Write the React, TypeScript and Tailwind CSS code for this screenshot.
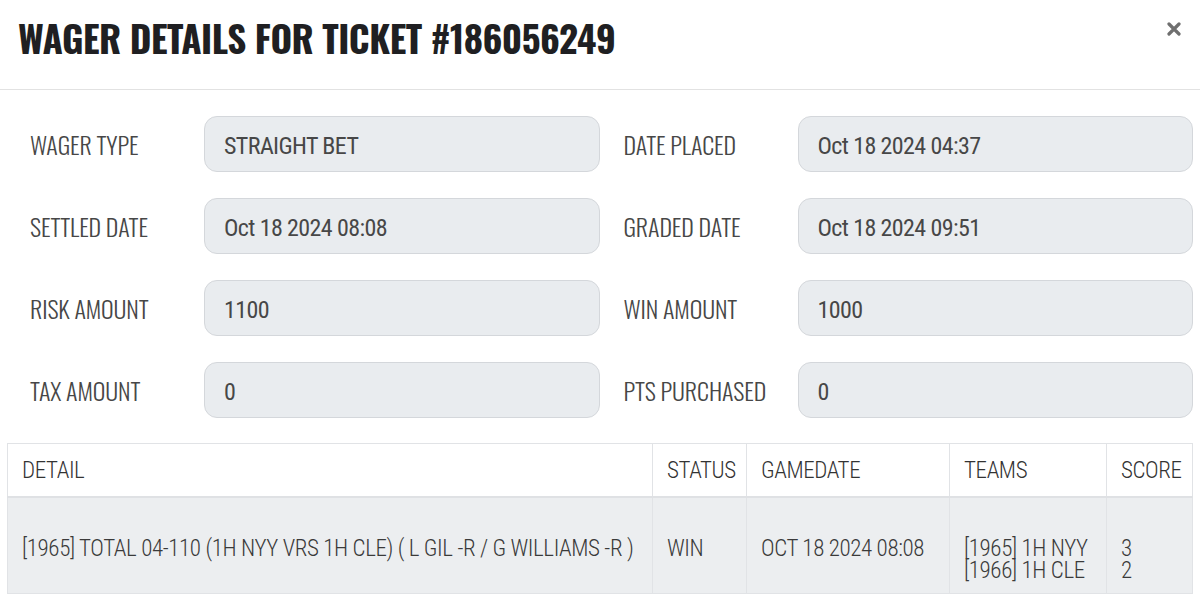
import React from "react";

const fields: [string, string][] = [
  ["WAGER TYPE", "STRAIGHT BET"],
  ["DATE PLACED", "Oct 18 2024 04:37"],
  ["SETTLED DATE", "Oct 18 2024 08:08"],
  ["GRADED DATE", "Oct 18 2024 09:51"],
  ["RISK AMOUNT", "1100"],
  ["WIN AMOUNT", "1000"],
  ["TAX AMOUNT", "0"],
  ["PTS PURCHASED", "0"],
];

const th = "border-r border-[#e1e3e6] px-[14px] pt-[3px] text-left font-light align-middle";
const td = "border-r border-[#e1e3e6] px-[14px] pt-[40px] align-top leading-[22px]";

export default function App() {
  return (
    <div className="w-[1200px] h-[600px] overflow-hidden bg-white text-[#333] font-['Oswald','Roboto_Condensed',sans-serif]">
      <div className="flex h-[90px] items-start justify-between border-b border-[#e2e2e2] pl-[18px] pr-[19px]">
        <h1 className="mt-[12px] text-[37px] font-bold leading-[52px] tracking-[-0.5px] text-[#1f1f22]">
          WAGER DETAILS FOR TICKET #186056249
        </h1>
        <button className="mt-[22px] flex h-[14px] w-[14px] items-center justify-center text-[#6f6f6f]" aria-label="Close">
          <svg width="14" height="14" viewBox="0 0 14 14">
            <path d="M2 2 L12 12 M12 2 L2 12" stroke="currentColor" strokeWidth="3.2" strokeLinecap="round" />
          </svg>
        </button>
      </div>

      <div className="grid grid-cols-2 gap-x-[24px] gap-y-[26px] pl-[30px] pr-[7px] pt-[26px]">
        {fields.map(([label, value]) => (
          <div key={label} className="flex items-center">
            <div className="w-[174px] shrink-0 text-[24px] font-light leading-[28px] tracking-[-0.1px] text-[#474747]">{label}</div>
            <div className="flex h-[56px] flex-1 items-center rounded-[13px] border border-[#d4d7db] bg-[#e9ecef] px-[19px] pt-[3px] font-['Roboto_Condensed',sans-serif] text-[24px] tracking-[-0.6px] text-[#474747]">
              {value}
            </div>
          </div>
        ))}
      </div>

      <div className="ml-[7px] mt-[25px] w-[1185px]">
        <table className="w-full table-fixed border-collapse border border-[#e1e3e6] font-['Roboto_Condensed',sans-serif] text-[23px] font-light tracking-[-0.4px] text-[#333]">
          <colgroup>
            <col className="w-[645px]" />
            <col className="w-[94px]" />
            <col className="w-[203px]" />
            <col className="w-[157px]" />
            <col className="w-[86px]" />
          </colgroup>
          <thead>
            <tr className="h-[53px] border-b-2 border-[#dfe1e4] bg-white">
              <th className={th}>DETAIL</th>
              <th className={th}>STATUS</th>
              <th className={th}>GAMEDATE</th>
              <th className={th}>TEAMS</th>
              <th className="px-[14px] pt-[3px] text-left font-light align-middle">SCORE</th>
            </tr>
          </thead>
          <tbody>
            <tr className="h-[97px] bg-[#eceef0] text-[#3a3a3a]">
              <td className={td}>
                [1965] TOTAL 04-110 (1H NYY VRS 1H CLE) ( L GIL -R / G WILLIAMS -R )
              </td>
              <td className={td}>WIN</td>
              <td className={td}>OCT 18 2024 08:08</td>
              <td className={td}>
                <div>[1965] 1H NYY</div>
                <div>[1966] 1H CLE</div>
              </td>
              <td className="px-[14px] pt-[40px] align-top leading-[22px]">
                <div>3</div>
                <div>2</div>
              </td>
            </tr>
          </tbody>
        </table>
      </div>
    </div>
  );
}
